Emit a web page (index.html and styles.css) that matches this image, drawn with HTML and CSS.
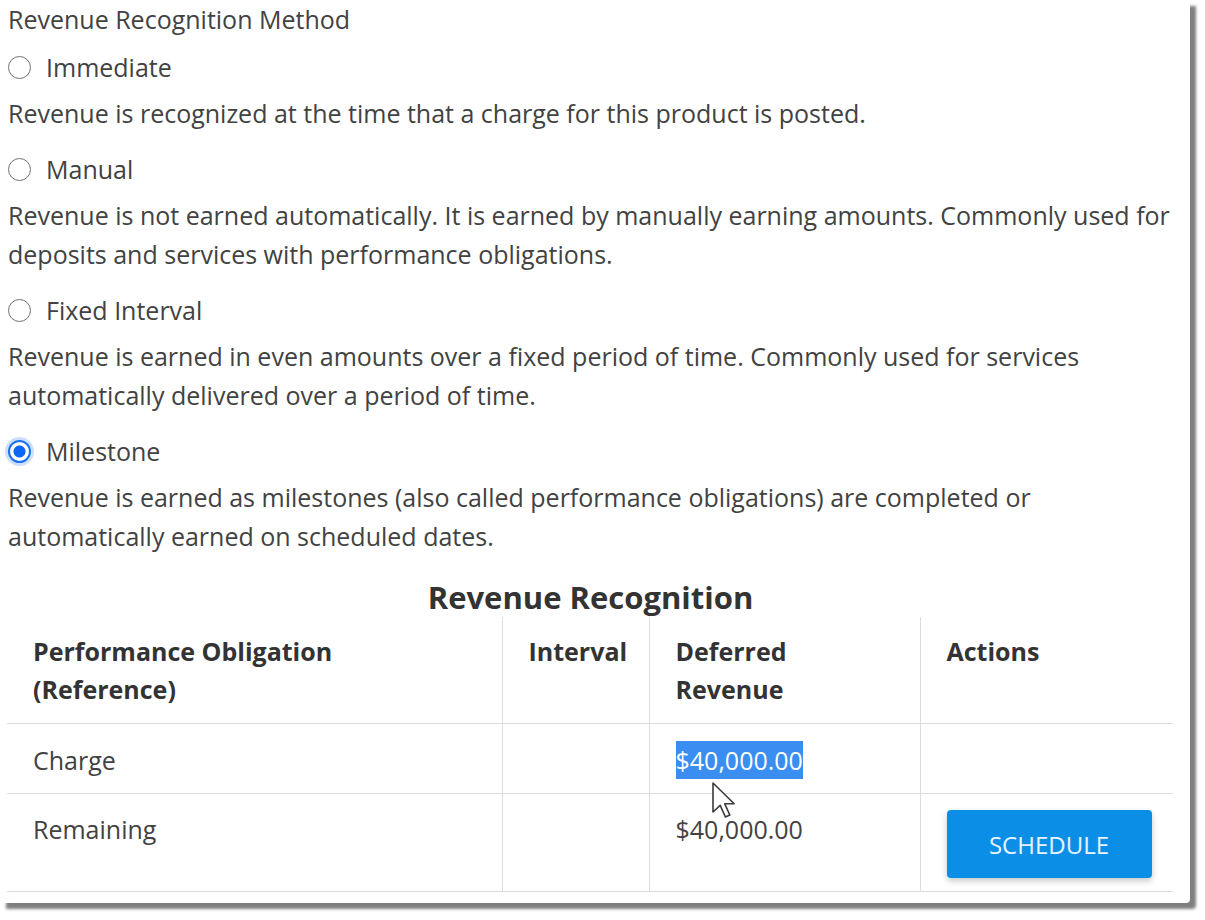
FILE: index.html
```html
<!DOCTYPE html>
<html lang="en">
<head>
<meta charset="utf-8">
<title>Revenue Recognition</title>
<link rel="stylesheet" href="styles.css">
</head>
<body>
<div class="panel">
  <div class="method">
    <div class="method-title">Revenue Recognition Method</div>

    <label class="option"><input type="radio" name="rrm" class="radio"><span>Immediate</span></label>
    <p class="desc">Revenue is recognized at the time that a charge for this product is posted.</p>

    <label class="option"><input type="radio" name="rrm" class="radio"><span>Manual</span></label>
    <p class="desc">Revenue is not earned automatically. It is earned by manually earning amounts. Commonly used for deposits and services with performance obligations.</p>

    <label class="option"><input type="radio" name="rrm" class="radio"><span>Fixed Interval</span></label>
    <p class="desc">Revenue is earned in even amounts over a fixed period of time. Commonly used for services automatically delivered over a period of time.</p>

    <label class="option"><input type="radio" name="rrm" class="radio" checked><span>Milestone</span></label>
    <p class="desc">Revenue is earned as milestones (also called performance obligations) are completed or automatically earned on scheduled dates.</p>
  </div>

  <h2 class="table-title">Revenue Recognition</h2>
  <div class="table-wrap">
    <table class="rr-table">
      <colgroup>
        <col class="c1"><col class="c2"><col class="c3"><col class="c4">
      </colgroup>
      <thead>
        <tr>
          <th>Performance Obligation (Reference)</th>
          <th>Interval</th>
          <th>Deferred Revenue</th>
          <th>Actions</th>
        </tr>
      </thead>
      <tbody>
        <tr class="row-charge">
          <td>Charge</td>
          <td></td>
          <td><span class="selected">$40,000.00</span></td>
          <td></td>
        </tr>
        <tr class="row-remaining">
          <td>Remaining</td>
          <td></td>
          <td>$40,000.00</td>
          <td><button class="btn-schedule" type="button">SCHEDULE</button></td>
        </tr>
      </tbody>
    </table>
    <svg class="cursor" width="26" height="38" viewBox="0 0 13 19" aria-hidden="true">
      <path d="M1 1 L1 15.5 L4.6 12.2 L7.2 18 L9.4 17 L6.9 11.4 L11.6 11.4 Z" fill="#fff" stroke="#3a3a3a" stroke-width="0.8" stroke-linejoin="round"/>
    </svg>
  </div>
</div>
</body>
</html>
```

FILE: styles.css
```css
html, body {
  margin: 0;
  padding: 0;
  background: #ffffff;
}

body {
  font-family: "Open Sans", "Noto Sans", "Liberation Sans", sans-serif;
  color: #424242;
  font-size: 25px;
  line-height: 39px;
  height: 920px;
}

.panel {
  width: 1190px;
  height: 903px;
  box-sizing: border-box;
  padding: 0 0 0 8px;
  background: #ffffff;
  box-shadow: 6px 6px 3px rgba(0, 0, 0, 0.5);
  border-radius: 0 0 4px 0;
  overflow: hidden;
}

.method {
  display: flex;
  flex-direction: column;
}

.method-title {
  margin-bottom: 9px;
}

.option {
  display: flex;
  align-items: center;
  gap: 15px;
  height: 39px;
  margin-bottom: 7px;
}

.radio {
  appearance: none;
  -webkit-appearance: none;
  margin: 0;
  width: 23px;
  height: 23px;
  border-radius: 50%;
  border: 1.5px solid #707070;
  background: #fff;
  box-sizing: border-box;
  flex: none;
}

.radio:checked {
  border: 2px solid #1a6ff0;
  background: radial-gradient(circle, #0d67f2 0 5.5px, #ffffff 6.5px);
  box-shadow: 0 0 0 3px rgba(90, 150, 245, 0.3);
}

.desc {
  margin: 0 0 17px 0;
  max-width: 1165px;
}

.table-title {
  margin: 5px 0 0 0;
  text-align: center;
  font-size: 31px;
  line-height: 39px;
  font-weight: 700;
  color: #333333;
  width: 1165px;
}

.table-wrap {
  position: relative;
  width: 1166px;
  margin-left: -1px;
}

.rr-table {
  width: 1166px;
  border-collapse: collapse;
  table-layout: fixed;
}

.c1 { width: 495px; }
.c2 { width: 147px; }
.c3 { width: 271px; }
.c4 { width: 253px; }

.rr-table th,
.rr-table td {
  text-align: left;
  vertical-align: top;
  padding: 0 10px 0 26px;
  border-left: 1px solid #dcdcdc;
  border-bottom: 1px solid #dcdcdc;
}

.rr-table th:first-child,
.rr-table td:first-child {
  border-left: none;
}

.rr-table th {
  font-weight: 700;
  color: #333333;
  line-height: 38px;
  padding-top: 15px;
  padding-right: 36px;
  padding-bottom: 15px;
}

.row-charge td {
  padding-top: 17px;
  padding-bottom: 13px;
}

.row-remaining td {
  padding-top: 16px;
  padding-bottom: 13px;
}

.selected {
  background: #3a8ef2;
  color: #ffffff;
  padding: 2px 0;
}

.btn-schedule {
  display: block;
  width: 205px;
  height: 68px;
  border: none;
  border-radius: 4px;
  background: #0b8fe6;
  color: #e8f4ff;
  font-family: "Open Sans", "Noto Sans", "Liberation Sans", sans-serif;
  font-size: 24px;
  letter-spacing: 0;
  box-shadow: 0 3px 6px rgba(0, 0, 0, 0.22);
  cursor: pointer;
}

.cursor {
  position: absolute;
  left: 704px;
  top: 164px;
}
```
